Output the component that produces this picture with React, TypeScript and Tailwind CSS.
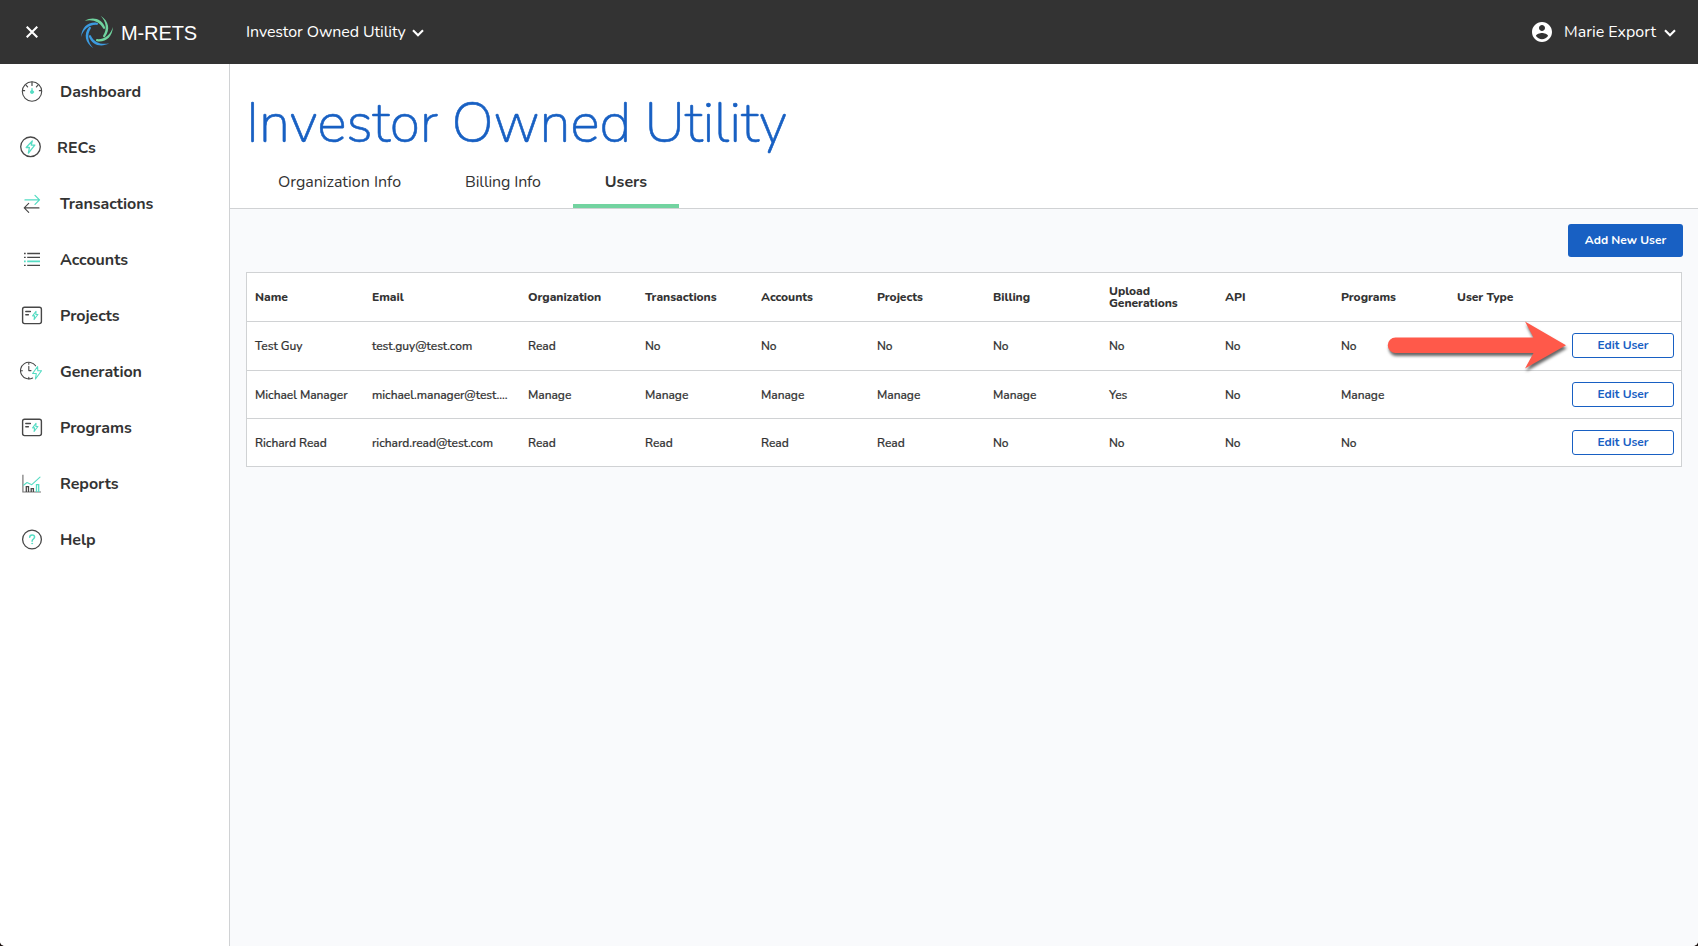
import React from "react";

const DARK = "#474747";
const TEAL = "#55dcc3";

type IconProps = { children: React.ReactNode; width?: number };

function Icon({ children, width = 24 }: IconProps) {
  return (
    <svg
      width={width}
      height={24}
      viewBox={`0 0 ${width} 24`}
      fill="none"
      stroke={DARK}
      strokeWidth={1.3}
      strokeLinecap="round"
      strokeLinejoin="round"
      className="shrink-0"
    >
      {children}
    </svg>
  );
}

const DashboardIcon = () => (
  <Icon>
    <circle cx="12" cy="11.5" r="9.7" strokeWidth={1.1} />
    <path d="M12 2v3.5M2.6 10.7h2M19.4 10.7h2M6 5.2l1.6 1.6M18 5.2l-1.6 1.6" strokeWidth={1.2} />
    <path d="M12 8.7v3" stroke={TEAL} />
    <circle cx="12" cy="12" r="1.6" fill={TEAL} stroke={TEAL} strokeWidth={0.8} />
  </Icon>
);

const RecsIcon = () => (
  <Icon width={21}>
    <circle cx="10.5" cy="10.8" r="9.8" />
    <path d="M12.3 4.9L6.2 11.5h3.2l-1 5.6 6.4-8h-3.6z" stroke={TEAL} />
  </Icon>
);

const TransactionsIcon = () => (
  <Icon>
    <path d="M5 7.9h14.3M15 3.4l4.5 4.5-4.5 4.5" stroke={TEAL} />
    <path d="M19 15.9H4.5M8.7 11.4l-4.5 4.5 4.5 4.5" strokeWidth={1.1} />
  </Icon>
);

const AccountsIcon = () => (
  <Icon>
    <g strokeLinecap="butt">
      <path d="M4 5.5h1.7M7.2 5.5H20M4 9.4h1.7M7.2 9.4H20M4 17.3h1.7M7.2 17.3H20" />
      <path d="M4 13.3h1.7M7.2 13.3H20" stroke={TEAL} strokeWidth={1.7} />
    </g>
  </Icon>
);

const CardIcon = () => (
  <Icon>
    <rect x="2.6" y="3.3" width="18.8" height="16.3" rx="2" strokeWidth={1.4} />
    <path d="M5.8 7.5h4.6M5.8 10.8h2.6" strokeWidth={1.4} />
    <path d="M16 7.2l-3.4 4.7h2l-.5 3.6 3.8-5h-2z" stroke={TEAL} strokeWidth={1.1} />
  </Icon>
);

const GenerationIcon = () => (
  <Icon>
    <path d="M15.6 5.8A8.3 8.3 0 1 0 12.6 18" strokeWidth={1.1} />
    <path d="M8.8 2.7v1.5M8.8 17.3v1.4M.9 10.7h1.5M8.8 6.4v4.2h2.2" strokeWidth={1.1} />
    <path d="M17.6 6.5l-5 7h3.7l-.8 5.5 6-8.2h-3.7z" stroke={TEAL} strokeWidth={1.1} />
  </Icon>
);

const ReportsIcon = () => (
  <Icon>
    <g strokeLinecap="butt" strokeLinejoin="miter">
      <path d="M2.9 2.7v17.3H21" stroke="#777777" strokeWidth={1.2} />
      <path d="M6.3 20v-5.3h2.2V20M11.2 20v-3.4h2.2V20" />
      <path d="M16.5 20v-7.3h2.2V20" stroke={TEAL} />
    </g>
    <path d="M3.6 13.2l3.4-2.7 4.8 2.2L20 5.2" stroke={TEAL} strokeWidth={1.1} />
  </Icon>
);

const HelpIcon = () => (
  <Icon>
    <circle cx="12" cy="11.5" r="9.4" />
    <path d="M9.7 9.3c0-3.2 4.9-3 4.9-.2 0 1.9-2.5 1.9-2.5 4.1" stroke={TEAL} strokeWidth={1.5} />
    <circle cx="12.1" cy="15.5" r=".5" fill={TEAL} stroke={TEAL} strokeWidth={0.7} />
  </Icon>
);

const NAV: { label: string; icon: React.ReactNode }[] = [
  { label: "Dashboard", icon: <DashboardIcon /> },
  { label: "RECs", icon: <RecsIcon /> },
  { label: "Transactions", icon: <TransactionsIcon /> },
  { label: "Accounts", icon: <AccountsIcon /> },
  { label: "Projects", icon: <CardIcon /> },
  { label: "Generation", icon: <GenerationIcon /> },
  { label: "Programs", icon: <CardIcon /> },
  { label: "Reports", icon: <ReportsIcon /> },
  { label: "Help", icon: <HelpIcon /> },
];

const HEADERS = [
  "Name", "Email", "Organization", "Transactions", "Accounts", "Projects",
  "Billing", "Upload Generations", "API", "Programs", "User Type",
];

const ROWS = [
  ["Test Guy", "test.guy@test.com", "Read", "No", "No", "No", "No", "No", "No", "No", ""],
  ["Michael Manager", "michael.manager@test....", "Manage", "Manage", "Manage", "Manage", "Manage", "Yes", "No", "Manage", ""],
  ["Richard Read", "richard.read@test.com", "Read", "Read", "Read", "Read", "No", "No", "No", "No", ""],
];

const GRID = "grid grid-cols-[117px_156px_117px_repeat(8,116px)_1fr] items-center";

function Chevron() {
  return (
    <svg width="12" height="8" viewBox="0 0 12 8" fill="none" stroke="#fff" strokeWidth="2.1">
      <path d="M1 1.2l5 5 5-5" />
    </svg>
  );
}

function Logo() {
  const blade = "M0-9.3C-8.5-10.6-15.5-5-15.9 5-13.7-2.5-8-7.6-.1-7.1A1.1 1.1 0 0 0 0-9.3Z";
  return (
    <svg width="34" height="34" viewBox="-17 -17 34 34">
      <g fill="#3c9be0">
        <path d={blade} />
        <path d={blade} transform="rotate(-60)" />
        <path d={blade} transform="rotate(-120)" />
      </g>
      <g fill="#6fd39f">
        <path d={blade} transform="rotate(60)" />
        <path d={blade} transform="rotate(120)" />
        <path d={blade} transform="rotate(180)" />
      </g>
    </svg>
  );
}

function Header() {
  return (
    <header className="flex h-16 shrink-0 items-center bg-[#333333] text-base text-white">
      <svg className="ml-[26px]" width="12" height="12" viewBox="0 0 12 12" stroke="#fff" strokeWidth="2.1">
        <path d="M.7.7l10.6 10.6M11.3.7L.7 11.3" />
      </svg>
      <div className="ml-[42px] flex w-[166px] items-center">
        <Logo />
        <span className="ml-[7px] pt-0.5 font-['Liberation_Sans',sans-serif] text-[20px] leading-6 tracking-[-0.1px]">M-RETS</span>
      </div>
      <div className="flex items-center gap-1.5">
        <span className="tracking-[-0.1px]">Investor Owned Utility</span>
        <span className="pt-0.5"><Chevron /></span>
      </div>
      <div className="mr-[22px] ml-auto flex items-center">
        <svg width="24" height="24" viewBox="0 0 24 24" fill="#fff">
          <path d="M12 2C6.48 2 2 6.48 2 12s4.48 10 10 10 10-4.48 10-10S17.52 2 12 2zm0 3c1.66 0 3 1.34 3 3s-1.34 3-3 3-3-1.34-3-3 1.34-3 3-3zm0 14.2c-2.5 0-4.71-1.28-6-3.22.03-1.99 4-3.08 6-3.08 1.99 0 5.97 1.09 6 3.08-1.29 1.94-3.5 3.22-6 3.22z" />
        </svg>
        <span className="mr-2 ml-[10px]">Marie Export</span>
        <span className="pt-0.5"><Chevron /></span>
      </div>
    </header>
  );
}

function Sidebar() {
  return (
    <nav className="w-[230px] shrink-0 border-r border-[#d0d2d4] bg-white">
      {NAV.map(({ label, icon }) => (
        <a key={label} className="flex h-14 items-center gap-4 pl-5 text-base font-bold tracking-[-0.05px]">
          {icon}
          <span>{label}</span>
        </a>
      ))}
    </nav>
  );
}

function Arrow() {
  return (
    <svg
      className="absolute top-12 right-[115px] overflow-visible drop-shadow-[1px_3px_1.5px_rgba(0,0,0,0.6)]"
      width="180"
      height="50"
      viewBox="0 0 180 50"
      fill="#ff594a"
    >
      <path d="M9.5 16.5H147.500L139 .5 180 24.200 139 47.500 147.500 32H9.500A7.750 7.750 0 0 1 9.500 16.500Z" />
    </svg>
  );
}

function UsersTable() {
  return (
    <div className="relative mt-[15px] mr-4 ml-4 border border-[#d0d2d4] bg-white text-xs font-medium">
      <div className={`${GRID} h-12 leading-3 font-extrabold`}>
        {HEADERS.map((h) => (
          <div key={h} className="pr-8 pl-2 tracking-[-0.04px]">{h}</div>
        ))}
      </div>
      {ROWS.map((row, i) => (
        <div key={row[0]} className={`${GRID} border-t border-[#d0d2d4] ${i === 0 ? "h-[49px]" : "h-12"}`}>
          {row.map((cell, j) => (
            <div key={j} className="pl-2 tracking-[-0.03px] whitespace-nowrap [-webkit-text-stroke:0.2px]">{cell}</div>
          ))}
          <button className={`mr-[7px] ml-[7px] flex h-[25px] items-center justify-center rounded-[3px] border border-[#1860c3] pb-px font-bold text-[#1860c3] ${i === 0 ? "mb-px" : ""}`}>
            Edit User
          </button>
        </div>
      ))}
      <Arrow />
    </div>
  );
}

export default function App() {
  return (
    <div className="h-[946px] w-[1698px] overflow-hidden bg-[#1c1210] font-[Nunito,Lato,sans-serif] text-[#333333]">
      <div className="flex h-full flex-col overflow-hidden rounded-b-[5px] bg-white">
        <Header />
        <div className="flex min-h-0 flex-1">
          <Sidebar />
          <main className="flex-1 bg-[#f9fafc]">
            <div className="border-b border-[#d0d2d4] bg-white px-4 pt-7">
              <h1 className="text-[56px] leading-[64px] font-extralight tracking-[-0.2px] text-[#1860c3] [-webkit-text-stroke:0.6px]">Investor Owned Utility</h1>
              <div className="flex text-base">
                <div className="h-[52px] px-8 pt-[14px]">Organization Info</div>
                <div className="h-[52px] px-8 pt-[14px] tracking-[-0.15px]">Billing Info</div>
                <div className="h-[52px] border-b-4 border-[#72d3a0] px-8 pt-[14px] font-bold">Users</div>
              </div>
            </div>
            <div className="flex justify-end pt-[15px] pr-[15px]">
              <button className="h-[33px] w-[115px] rounded-[3px] bg-[#1860c3] pb-0.5 text-xs font-bold text-white">
                Add New User
              </button>
            </div>
            <UsersTable />
          </main>
        </div>
      </div>
    </div>
  );
}
